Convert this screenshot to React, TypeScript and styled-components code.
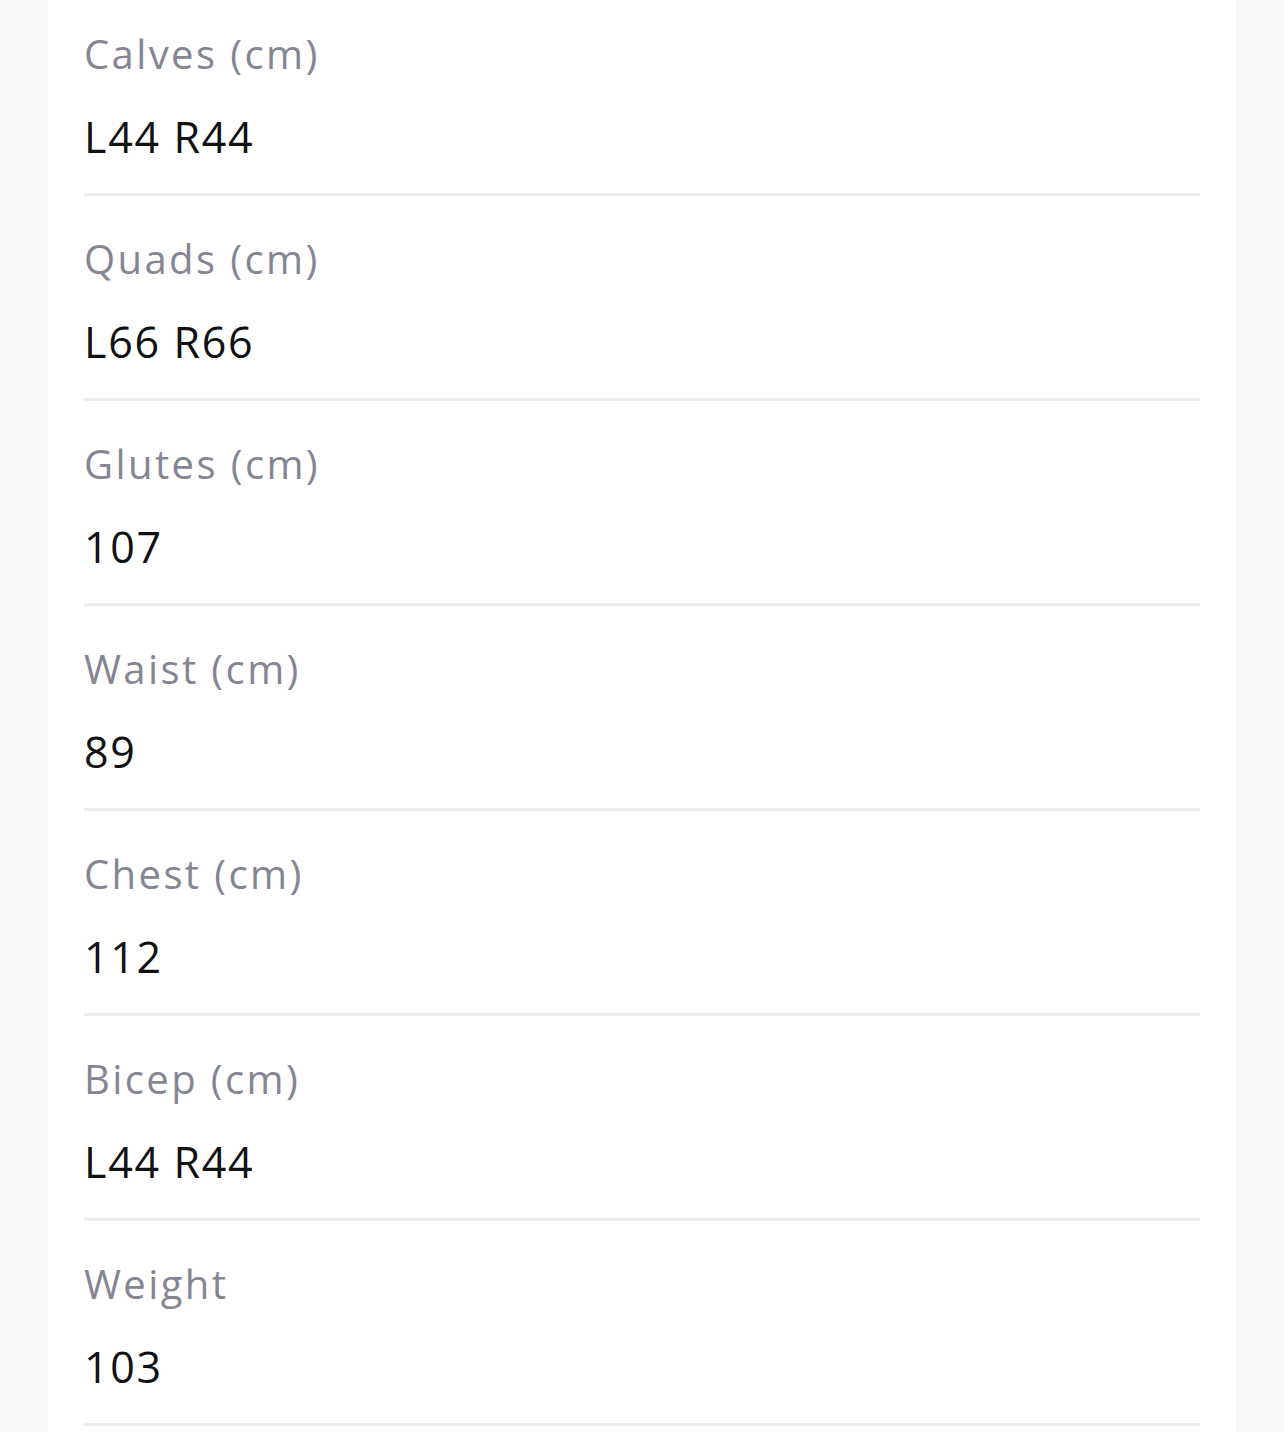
import React from "react";
import styled, { createGlobalStyle } from "styled-components";

const GlobalStyle = createGlobalStyle`
  html, body {
    margin: 0;
    padding: 0;
    background: #f7f7f7;
    overflow: hidden;
  }
  body {
    font-family: "Open Sans", "Noto Sans", sans-serif;
  }
`;

const Page = styled.div`
  height: 1432px;
  padding: 0 48px;
  overflow: hidden;
`;

const Card = styled.div`
  background: #ffffff;
  min-height: calc(100% + 9px);
  padding: 0 36px;
  /* list is scrolled a little */
  margin-top: -9px;
`;

const Row = styled.div`
  display: flex;
  flex-direction: column;
  padding: 35px 0 28px;
  border-bottom: 3px solid #eeeeee;
`;

const Label = styled.div`
  font-size: 40px;
  line-height: 56px;
  color: #858594;
  letter-spacing: 2.4px;
`;

const Value = styled.div`
  margin-top: 27px;
  font-size: 43px;
  line-height: 56px;
  color: #111111;
  letter-spacing: 1.7px;
`;

const measurements = [
  { label: "Calves (cm)", value: "L44 R44" },
  { label: "Quads (cm)", value: "L66 R66" },
  { label: "Glutes (cm)", value: "107" },
  { label: "Waist (cm)", value: "89" },
  { label: "Chest (cm)", value: "112" },
  { label: "Bicep (cm)", value: "L44 R44" },
  { label: "Weight", value: "103" },
];

export default function App() {
  return (
    <>
      <GlobalStyle />
      <Page>
        <Card>
          {measurements.map((m) => (
            <Row key={m.label}>
              <Label>{m.label}</Label>
              <Value>{m.value}</Value>
            </Row>
          ))}
        </Card>
      </Page>
    </>
  );
}
